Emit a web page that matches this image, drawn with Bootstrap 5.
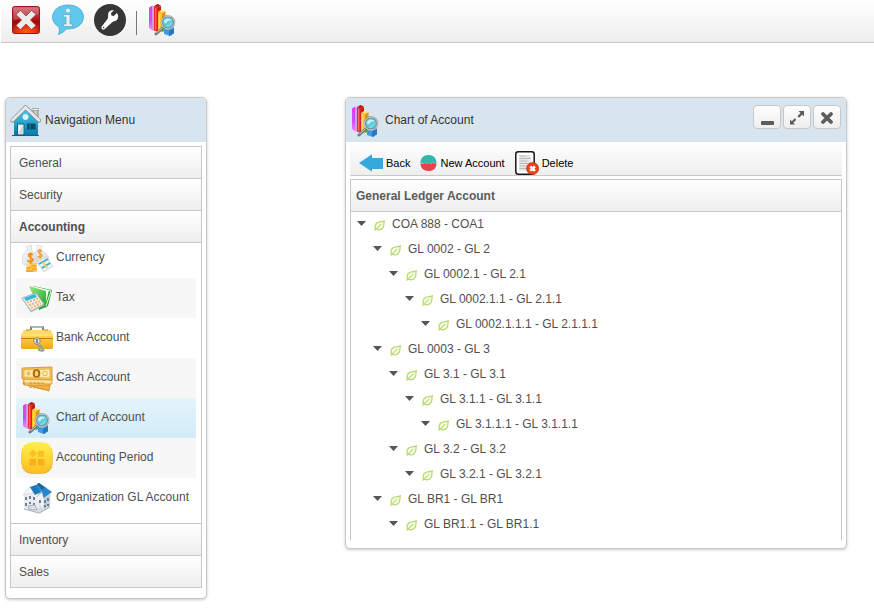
<!DOCTYPE html>
<html lang="en">
<head>
<meta charset="utf-8">
<meta name="viewport" content="width=device-width, initial-scale=1">
<title>Chart of Account</title>
<link href="https://cdn.jsdelivr.net/npm/bootstrap@5.3.0/dist/css/bootstrap.min.css" rel="stylesheet">
<style>
body { font-family: "Liberation Sans", Arial, sans-serif; font-size: 12px; line-height: 16px; color: #4f4f4f; background: #fff; }
ul { list-style: none; margin: 0; padding: 0; }
svg { display: block; flex: none; }
button { font: inherit; color: inherit; }
.topbar { height: 43px; margin-left: 1px; padding: 0 9px; gap: 10px; border-bottom: 1px solid #c9c9c9; background: linear-gradient(#fff, #eee); }
.topbar button, .plain-btn { border: 0; background: none; padding: 0; }
.topbar .divider { width: 1px; height: 24px; background: #777; margin-top: 4px; }
.workspace { padding: 54px 27px 16px 5px; gap: 138px; }
.window { background: #fff; border: 1px solid #c8c8c8; border-radius: 5px; box-shadow: 0 1px 3px rgba(0,0,0,.22); min-width: 0; }
.side { width: 202px; flex: none; padding-bottom: 10px; }
.title-strip { height: 44px; background: #d9e5ee; border-radius: 4px 4px 0 0; color: #333; padding: 2px 5px 0 4px; }
.title-strip h1, .title-strip h2 { font-size: 12px; line-height: 16px; margin: 0; padding-bottom: 2px; font-weight: 400; }
.menu { margin: 4px 4px 0; border: 1px solid #c8c8c8; }
.menu-head { display: block; width: 100%; height: 32px; border: 0; border-bottom: 1px solid #c8c8c8; text-align: left; padding: 0 8px; background: linear-gradient(#fff, #eee); }
.menu-head.last { height: 31px; border-bottom: 0; }
.menu-body { overflow: hidden; padding: 0 5px 5px; border-bottom: 1px solid #c8c8c8; }
.menu-body ul { margin-top: -5px; }
.menu-body a { height: 40px; padding: 0 5px 2px; gap: 3px; color: #4f4f4f; text-decoration: none; white-space: nowrap; }
.menu-body svg { margin-top: 2px; }
.menu-body li:nth-child(even) { background: #f7f7f7; }
.menu-body li.current { background: linear-gradient(#e4f4fb, #d2ecf8); }
.win-btns { gap: 2px; padding-top: 5px; }
.win-btn { width: 28px; height: 24px; padding: 0; border: 1px solid #c8c8c8; border-radius: 4px; background: linear-gradient(#fff, #eee); }
.actions { height: 34px; margin: 0 4px; padding: 9px 9px 0; gap: 10px; border-bottom: 1px solid #c8c8c8; background: linear-gradient(#fff, #eee); color: #000; font-size: 11px; }
.actions button { height: 24px; gap: 3px; white-space: nowrap; }
.ledger { margin: 3px 4px 8px; border: 1px solid #c8c8c8; border-bottom: 0; padding-bottom: 3px; }
.ledger h2 { height: 32px; margin: 0; padding: 0 5px; font-size: 12px; line-height: 32px; font-weight: 700; color: #5c5c5c; border-bottom: 1px solid #c8c8c8; background: linear-gradient(#fff, #eee); }
.tree { padding-left: 6px; }
.tree ul { padding-left: 16px; }
.node { height: 25px; padding-bottom: 2px; }
.node .leaf { margin: 3px 7px 0 8px; }
</style>
<script src="https://cdn.jsdelivr.net/npm/bootstrap@5.3.0/dist/js/bootstrap.bundle.min.js"></script>
</head>
<body>
<svg width="0" height="0" class="position-absolute" aria-hidden="true">
  <defs>
    <linearGradient id="gRed" x2="0" y2="1"><stop stop-color="#c9606a"/><stop offset=".45" stop-color="#b8191c"/><stop offset=".55" stop-color="#a30508"/><stop offset="1" stop-color="#d8230c"/></linearGradient>
    <radialGradient id="gGlow" cy=".9" r=".6"><stop stop-color="#ff5a18"/><stop offset="1" stop-color="#ff5a18" stop-opacity="0"/></radialGradient>
    <linearGradient id="gHouse" x2="0" y2="1"><stop stop-color="#4fd0f0"/><stop offset="1" stop-color="#0679ad"/></linearGradient>
    <linearGradient id="gGold" x2="0" y2="1"><stop stop-color="#ffd95a"/><stop offset="1" stop-color="#f0a817"/></linearGradient>
    <linearGradient id="gButton" x2="0" y2="1"><stop stop-color="#fff04a"/><stop offset="1" stop-color="#ffbd25"/></linearGradient>
    <linearGradient id="gGreen" x2="1" y2="1"><stop stop-color="#9be77c"/><stop offset="1" stop-color="#1ba92e"/></linearGradient>
    <linearGradient id="gPurple" x2="0" y2="1"><stop stop-color="#e23cf0"/><stop offset=".6" stop-color="#cf4cf5"/><stop offset="1" stop-color="#f08cff"/></linearGradient>
    <linearGradient id="gBag" x2="1" y2="1"><stop stop-color="#fff"/><stop offset="1" stop-color="#d3d5d8"/></linearGradient>
    <symbol id="i-chart" viewBox="0 0 32 32">
      <path d="M2 3.500l3.500-2v25L2 24z" fill="url(#gPurple)"/><path d="M5 3l2-1v25l-2-1z" fill="#c9a0e8"/>
      <path d="M7 2l4 1.500V28l-4-1.500z" fill="#ef2a2e"/><path d="M10.500 3.500L14 2v22l-3.500 4z" fill="#c11a1c"/><path d="M7 2l3.500-2L14 1.500 11 3.500z" fill="#b51a1f"/><path d="M8.700 4v22" stroke="#ff7a68"/>
      <path d="M11 8l4 1v19.500L11 27z" fill="#ffc02c"/><path d="M15 9l3.500-2v16L15 28z" fill="#e8940f"/><path d="M11 8l3-2 4.500 1L15 9z" fill="#ffe070"/><path d="M12.700 9.500v16" stroke="#ffe36c"/>
      <path d="M15 14l4-2.500 4 1.500v12l-8 3z" fill="#3fb43a"/><path d="M16 14l3-2.500 4 1.500-3 2z" fill="#74cf55"/>
      <path d="M17 25h8v6l-2 1-6-2z" fill="#3a9be4"/><path d="M22 26.500l5-3v6l-5 2.500z" fill="#2478c4"/><path d="M17 25l4-2 6 .500-5 3z" fill="#58b0f2"/>
      <path d="M15.500 24L9 30" stroke="#6d7b80" stroke-width="3" stroke-linecap="round"/><path d="M15.500 23.500L9.500 29" stroke="#c5ced0" stroke-width="1"/>
      <circle cx="21" cy="18.500" r="6.200" fill="#5ecbdc" stroke="#7c898d" stroke-width="2.200"/><circle cx="21" cy="18.500" r="6.500" fill="none" stroke="#cdd5d7" stroke-width="1"/>
      <path d="M17 18.500q0-4 4-4 3 0 4 2-4-1-6 3z" fill="#c2f1f6"/><path d="M19 22.500q4 0 5-4" stroke="#8ee4ea" fill="none"/>
    </symbol>
    <symbol id="i-leaf" viewBox="0 0 11 11"><path d="M10.300.8Q8 1.600 5.500 1.900C2 2.500.7 5 1.300 8.800c3 1.600 7 1.200 8.100-2C10.100 4.700 9.700 3 10.300.8z" fill="#f8fced" stroke="#b7db6d" stroke-width="1.300"/><path d="M.6 10.500L7.400 3.900" fill="none" stroke="#b7db6d" stroke-width="1.100"/></symbol>
    <symbol id="i-caret" viewBox="0 0 9 5"><path d="M0 0h9L4.500 5z" fill="#555"/></symbol>
  </defs>
</svg>

<header class="topbar d-flex align-items-start">
  <button type="button" aria-label="Close" class="pt-1"><svg width="32" height="32" viewBox="0 0 32 32">
    <g transform="translate(1 0)"><rect x="1.500" y="2.500" width="27" height="27" rx="2" fill="url(#gRed)" stroke="#94191c"/><rect x="2" y="12" width="26" height="17" fill="url(#gGlow)"/>
    <path d="M2.500 3.500h25v7q-12 1-25 6z" fill="#fff" opacity=".18"/>
    <path d="M9.500 6.500L15 12l5.500-5.500 4.500 4-5.500 5.500 5.500 5.500-4.500 4L15 20l-5.500 5.500-4.500-4 5.500-5.500L5 10.500z" fill="#ececec" stroke="#8c2020" stroke-width=".6"/></g>
  </svg></button>
  <button type="button" aria-label="Information" class="pt-1"><svg width="32" height="32" viewBox="0 0 32 32">
    <path d="M16 1C6.500 1 .6 6.500.6 13c0 4.500 2.500 7.800 6.400 10q1 4-.4 7.500 4.800-2 8-5.500C25 25.500 31.400 20 31.400 13 31.400 6 25.500 1 16 1z" fill="#60c8ec" stroke="#3aa9d2" stroke-width=".8"/>
    <circle cx="16" cy="6.500" r="2.500" fill="#e6f0f4" stroke="#5aa7c4" stroke-width=".7"/><path d="M11.500 10.500h6.500v9.500h2.500v2.500h-9V20H14v-7h-2.500z" fill="#e6f0f4" stroke="#5aa7c4" stroke-width=".7"/>
  </svg></button>
  <button type="button" aria-label="Settings" class="pt-1"><svg width="32" height="32" viewBox="0 0 32 32">
    <circle cx="16" cy="16" r="16" fill="#363636"/>
    <path d="M23.600 8.200l-3 3-2.300-.6-.6-2.300 3-2.600c-3.500-.9-6.400 1.800-5.700 5.200L14.500 14l-5.800 7.500c-1.500 2.200 1 4.500 3 2.800l6.700-6.300 2.200-1.600c3.200.3 5.200-3 4-6.600z" transform="translate(-.8 .8)" fill="#fff"/><circle cx="9.700" cy="23.600" r=".8" fill="#363636"/>
  </svg></button>
  <span class="divider align-self-center"></span>
  <button type="button" aria-label="Chart of Account" class="pt-1"><svg width="32" height="32"><use href="#i-chart"/></svg></button>
</header>

<main class="workspace d-flex align-items-start">
  <nav class="window side" aria-label="Navigation Menu">
    <div class="title-strip d-flex align-items-center gap-1">
      <svg width="31" height="32" viewBox="0 0 31 32">
        <path d="M23 4h5v10h-4z" fill="#c9c9c9" stroke="#777" stroke-width=".8"/><path d="M22 3.500h6.500v2H22z" fill="#e9e9e9" stroke="#888" stroke-width=".5"/>
        <path d="M4 15L15.500 4 28 16v14H4z" fill="url(#gHouse)"/>
        <path d="M2.500 15.500L15.500 2.500 29 15.500" fill="none" stroke="#7d858a" stroke-width="4.200" stroke-linecap="round"/><path d="M2.500 15.200L15.500 2.500 29 15.200" fill="none" stroke="#e8eaec" stroke-width="2.800" stroke-linecap="round"/>
        <circle cx="15.500" cy="12" r="2.600" fill="#d7f1f8" stroke="#fff" stroke-width=".7"/>
        <path d="M7.500 19H14v10.500H7.500z" fill="#eee" stroke="#08658c"/><path d="M13 20v9.500H8z" fill="#cfd5d8"/><path d="M17 18.500h8.500v6H17z" fill="#064d6a"/><path d="M20 18.500v6" stroke="#177fa5"/><path d="M2 30.500h27" stroke="#345767"/>
      </svg>
      <h2>Navigation Menu</h2>
    </div>
    <div class="menu">
      <button type="button" class="menu-head" aria-expanded="false">General</button>
      <button type="button" class="menu-head" aria-expanded="false">Security</button>
      <button type="button" class="menu-head fw-bold" aria-expanded="true">Accounting</button>
      <div class="menu-body">
        <ul>
          <li><a href="#" class="d-flex align-items-center"><svg width="32" height="32" viewBox="0 0 32 32">
            <path d="M16 3l5 1-1 4c4 2 8 6 8 9l-9 6-7-9 4-6z" fill="url(#gBag)" stroke="#d2d2d2" stroke-width=".6"/><path d="M5 5l6-2-1 5c5 3 8 9 6 14-3 3-11 3-14 0-2-6 0-11 5-14z" fill="url(#gBag)" stroke="#ccc" stroke-width=".6"/>
            <path d="M12 13q-3-3-4.500 0c0 3 4.500 2 4.500 5-1 3-5 2-5.500 0M9.700 10.500v12" fill="none" stroke="#ef8d16" stroke-width="1.700"/><path d="M21 9q-4-2-4 1c1 2 4 1 4 4-1 2-4 1-4 0M19 7v10" fill="none" stroke="#f2a137" stroke-width="1.400"/>
            <path d="M16 20l9-5 7 9-9 6z" fill="#eef4f3" stroke="#bbc8ca" stroke-width=".7"/><path d="M18 22l9-5M21 26l8-5" stroke="#3eb0c0" stroke-width="2"/><path d="M22 20l4 6" stroke="#efc875" stroke-width="2"/>
            <path d="M6 24h5v6H5zM11 21h4l1 9h-6z" fill="#ffc94e"/><path d="M5 26h5M5 29h7M10 24h6M11 27h5" stroke="#e68c14"/><circle cx="7" cy="23" r="1.800" fill="#ffe07b"/>
          </svg><span>Currency</span></a></li>
          <li><a href="#" class="d-flex align-items-center"><svg width="32" height="32" viewBox="0 0 32 32">
            <path d="M12 4l19 4-4 16-9 4z" fill="#24a331"/><path d="M11 4l17 4-4 16z" fill="#fff"/><path d="M8 4l17 5v17L12 13z" fill="url(#gGreen)"/><path d="M27 8l3 1-5 15" fill="none" stroke="#e4f8dd"/>
            <path d="M1 16l14-5 8 11-13 7z" fill="#edf0f1" stroke="#9fa5a8" stroke-width=".8"/><path d="M10 29l13-7v1.500l-13 7L1 17v-1z" fill="#b3b9bb"/><path d="M3 16l11-4 2 3-11 4z" fill="#35b6e2"/><path d="M6 20.500l11-4M8 23.200l11-4M10 26l10-4.500" stroke="#f2b766" stroke-width="1.900" stroke-dasharray="2 1.300"/>
          </svg><span>Tax</span></a></li>
          <li><a href="#" class="d-flex align-items-center"><svg width="32" height="32" viewBox="0 0 32 32">
            <path d="M10 9V5h12v4" fill="none" stroke="#66706f" stroke-width="1.700"/><path d="M10 5h12" stroke="#d4d8d8" stroke-width="1"/><path d="M3 8h27l2 5H0z" fill="#ffda65"/><path d="M0 12h32v14q0 1-1 1H1q-1 0-1-1z" fill="url(#gGold)"/><path d="M0 16.500h32" stroke="#c77e08"/><path d="M1 13h30" stroke="#ffeb8c"/>
            <path d="M5 8h4M23 8h4" stroke="#d48a0b"/><circle cx="16" cy="19" r="3.300" fill="#dfe2e3" stroke="#777" stroke-width=".8"/><path d="M16 17v4" stroke="#555" stroke-width="1.300"/><path d="M16 22l3 3-1 3 4 1M19 23l4 6" fill="none" stroke="#9a9d9e" stroke-width="2"/>
          </svg><span>Bank Account</span></a></li>
          <li><a href="#" class="d-flex align-items-center"><svg width="32" height="32" viewBox="0 0 32 32">
            <path d="M4 14l26 4-2 11L2 22z" fill="#f2b13c" stroke="#c98020" stroke-width=".7"/><path d="M4 20l25-3v6L3 23z" fill="#ffd982" stroke="#c98020" stroke-width=".7"/><path d="M3 16l28 1v5L3 21z" fill="#ffe39a" stroke="#d59530" stroke-width=".7"/>
            <path d="M1 6l30-1v13L1 17z" fill="#f7c355" stroke="#cc8a2a" stroke-width=".8"/><path d="M3 8l26-1v9L3 15z" fill="#ffe9ac" stroke="#e0a848" stroke-width=".7"/><ellipse cx="15.500" cy="11.500" rx="3.800" ry="4.200" fill="#a8670f"/><ellipse cx="15.500" cy="11.500" rx="1.800" ry="2.800" fill="#f7cf75"/><circle cx="7.500" cy="11.500" r="2" fill="#eab95c"/><circle cx="24" cy="11.500" r="2.200" fill="#fff7b0" stroke="#e0b050"/><path d="M8 21h15M8 25l15 2" stroke="#d59530" stroke-dasharray="3 1"/>
          </svg><span>Cash Account</span></a></li>
          <li class="current"><a href="#" aria-current="page" class="d-flex align-items-center"><svg width="32" height="32"><use href="#i-chart"/></svg><span>Chart of Account</span></a></li>
          <li><a href="#" class="d-flex align-items-center"><svg width="32" height="32" viewBox="0 0 32 32">
            <rect x=".5" y=".8" width="31" height="31" rx="10" fill="#dca02c"/><rect x=".5" y=".2" width="31" height="30.800" rx="10" fill="url(#gButton)"/><path d="M12 7.500l4 4-4 4-4-4z" fill="#fbc21f"/><rect x="17" y="9" width="6" height="6" fill="#f9c023"/><rect x="8.500" y="17" width="6.500" height="6.500" fill="#f6b01c"/><rect x="17" y="17" width="6.500" height="6.500" fill="#f6b01c"/>
          </svg><span>Accounting Period</span></a></li>
          <li><a href="#" class="d-flex align-items-center"><svg width="32" height="32" viewBox="0 0 32 32">
            <path d="M3 12l6-7 9-4 5 4 7 5-1 15-10 7L3 27z" fill="#e9edf1"/><path d="M18 15l11-6v16l-10 6z" fill="#c6d0d9"/><path d="M18 1l7 5-8 6-6-6z" fill="#2f8dcc"/><path d="M18 1l7 5-4 2-5-6z" fill="#1767a6"/><path d="M9 5l4 6-11 2z" fill="#f5f7f8" stroke="#b6c1ca" stroke-width=".5"/><path d="M9 5l6-2 4 7-5 3z" fill="#1c79b9"/><path d="M24 5l7 5-10 7-5-2z" fill="#2688cc"/><path d="M16 15l5-5 2 8-1 12" fill="#f1f3f5"/>
            <path d="M5 15v3M9 14v3M13 15v3M5 21v3M9 20v2M13 21v2M19 18v3M24 18v3M27 16v3M24 23v3M27 22v2" stroke="#54677a" stroke-width="1.600"/><path d="M7 24l7-1 2 5-8-1zM3 27l15 4 11-6" fill="#d8dde2" stroke="#9ba7b3" stroke-width=".8"/>
          </svg><span>Organization GL Account</span></a></li>
        </ul>
      </div>
      <button type="button" class="menu-head" aria-expanded="false">Inventory</button>
      <button type="button" class="menu-head last" aria-expanded="false">Sales</button>
    </div>
  </nav>

  <section class="window flex-grow-1">
    <div class="title-strip d-flex align-items-center gap-1">
      <svg width="31" height="32" viewBox="0 0 31 32"><use href="#i-chart" width="32" height="32"/></svg>
      <h1 class="flex-grow-1">Chart of Account</h1>
      <div class="win-btns d-flex align-self-start">
        <button type="button" class="win-btn" aria-label="Minimize"><svg width="26" height="22" viewBox="0 0 26 22"><rect x="7" y="15" width="13" height="4" rx=".8" fill="#5c5c5c"/></svg></button>
        <button type="button" class="win-btn" aria-label="Maximize"><svg width="26" height="22" viewBox="0 0 26 22"><path d="M14.500 5H20v5.500l-1.800-1.700-3.200 3-1.500-1.500 3-3.300zM6 13.500l1.800 1.700 3-3 1.500 1.500-3 3 1.700 1.800H6z" fill="#5c5c5c"/></svg></button>
        <button type="button" class="win-btn" aria-label="Close window"><svg width="26" height="22" viewBox="0 0 26 22"><path d="M9 8l8 8M17 8l-8 8" stroke="#5c5c5c" stroke-width="3.800" stroke-linecap="round"/></svg></button>
      </div>
    </div>
    <div class="actions d-flex align-items-center">
      <button type="button" class="plain-btn d-flex align-items-center"><svg width="24" height="18" viewBox="0 0 24 18"><path d="M0 9L13 .3V4h11v11H13v2.700z" fill="#35a8dc"/></svg>Back</button>
      <button type="button" class="plain-btn d-flex align-items-center"><svg width="17" height="16" viewBox="0 0 17 16"><path d="M.5 8C.5 3 3.500 0 8.500 0s8 3 8 8l-2 .5-1.500-1-2 1-2-.5-2 1-2-1.500-2 1z" fill="#30b8a8"/><path d="M.5 8.500l2.500.2 2-1 2 1.300 2-1 2 .7 2-1 1.500.8 2-.3c0 5-3 7.800-8 7.800s-8-3-8-7.500z" fill="#e2454e"/></svg>New Account</button>
      <button type="button" class="plain-btn d-flex align-items-center"><svg width="24" height="24" viewBox="0 0 24 24"><rect x=".8" y=".8" width="18.400" height="22.400" rx="2.500" fill="#fff" stroke="#181818" stroke-width="1.500"/><path d="M4 4h12v16H4z" fill="#e6e6e6"/><path d="M4.500 5h6M4.500 7.500h11M4.500 10h8M4.500 12.500h10M4.500 15h7M4.500 17.500h8" stroke="#bbb"/><circle cx="17.600" cy="17.600" r="6" fill="#ed431d" stroke="#b92f16" stroke-width=".8"/><path d="M15.300 15.300l4.600 4.600M19.900 15.300l-4.600 4.600" stroke="#fff" stroke-width="2.600"/></svg>Delete</button>
    </div>
    <div class="ledger">
      <h2>General Ledger Account</h2>
      <ul class="tree" id="tree"></ul>
    </div>
  </section>
</main>
<script>
const accounts = [
  ["COA 888 - COA1", [
    ["GL 0002 - GL 2", [["GL 0002.1 - GL 2.1", [["GL 0002.1.1 - GL 2.1.1", [["GL 0002.1.1.1 - GL 2.1.1.1", []]]]]]]],
    ["GL 0003 - GL 3", [
      ["GL 3.1 - GL 3.1", [["GL 3.1.1 - GL 3.1.1", [["GL 3.1.1.1 - GL 3.1.1.1", []]]]]],
      ["GL 3.2 - GL 3.2", [["GL 3.2.1 - GL 3.2.1", []]]]
    ]],
    ["GL BR1 - GL BR1", [["GL BR1.1 - GL BR1.1", []]]]
  ]]
];
const branch = nodes => nodes.map(([name, kids]) => `<li><div class="node d-flex align-items-center">
  <button type="button" class="plain-btn" aria-label="Toggle ${name}"><svg width="9" height="5"><use href="#i-caret"/></svg></button>
  <svg class="leaf" width="11" height="11"><use href="#i-leaf"/></svg><span class="text-nowrap">${name}</span></div>${kids.length ? `<ul>${branch(kids)}</ul>` : ""}</li>`).join("");
document.getElementById("tree").innerHTML = branch(accounts);
</script>
</body>
</html>
